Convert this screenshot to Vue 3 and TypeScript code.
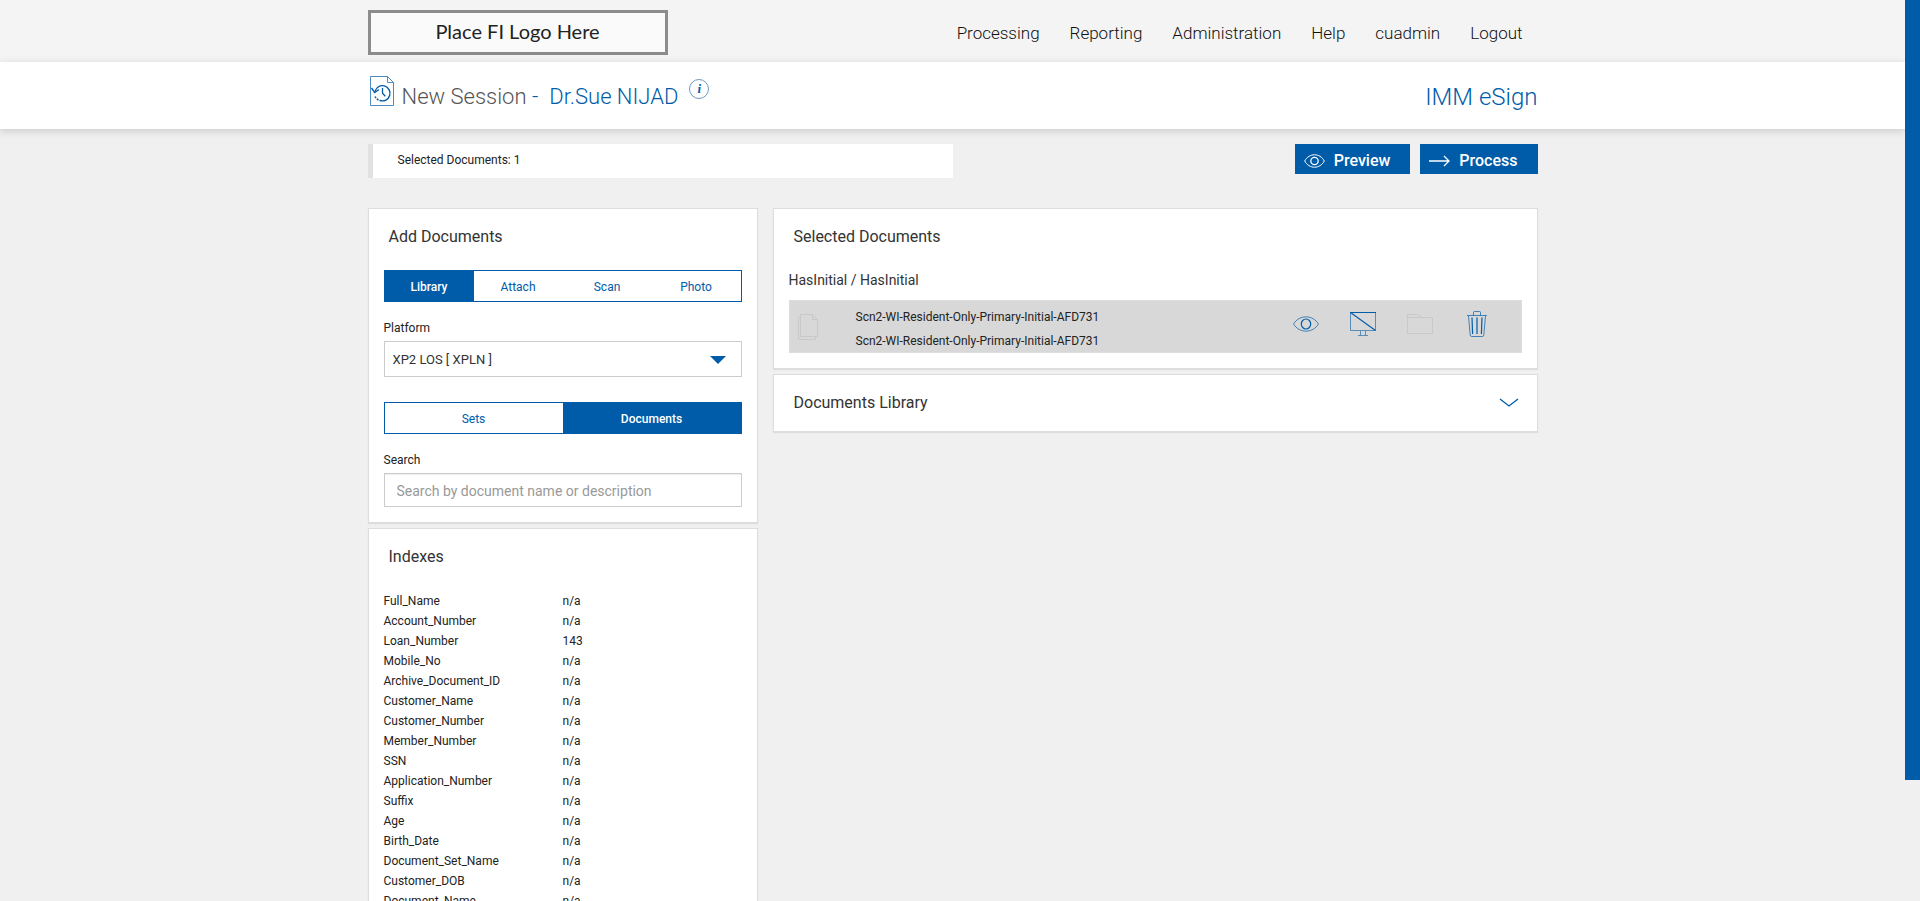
<script setup lang="ts">
import { nextTick, onBeforeUnmount, onMounted, ref } from 'vue'

interface IndexEntry {
  name: string
  value: string
}

const navItems: string[] = ['Processing', 'Reporting', 'Administration', 'Help', 'cuadmin', 'Logout']
const sourceTabs: string[] = ['Library', 'Attach', 'Scan', 'Photo']
const kindTabs: string[] = ['Sets', 'Documents']

const activeSource = ref('Library')
const activeKind = ref('Documents')
const platform = ref('XPLN')
const search = ref('')

const indexes: IndexEntry[] = [
  { name: 'Full_Name', value: 'n/a' },
  { name: 'Account_Number', value: 'n/a' },
  { name: 'Loan_Number', value: '143' },
  { name: 'Mobile_No', value: 'n/a' },
  { name: 'Archive_Document_ID', value: 'n/a' },
  { name: 'Customer_Name', value: 'n/a' },
  { name: 'Customer_Number', value: 'n/a' },
  { name: 'Member_Number', value: 'n/a' },
  { name: 'SSN', value: 'n/a' },
  { name: 'Application_Number', value: 'n/a' },
  { name: 'Suffix', value: 'n/a' },
  { name: 'Age', value: 'n/a' },
  { name: 'Birth_Date', value: 'n/a' },
  { name: 'Document_Set_Name', value: 'n/a' },
  { name: 'Customer_DOB', value: 'n/a' },
  { name: 'Document_Name', value: 'n/a' },
]

const pane = ref<HTMLElement | null>(null)
const thumbHeight = ref(0)
const thumbTop = ref(0)

function syncThumb(): void {
  const el = pane.value
  if (!el) return
  const ratio = el.clientHeight / el.scrollHeight
  thumbHeight.value = Math.round(el.clientHeight * ratio)
  thumbTop.value = Math.round(el.scrollTop * ratio)
}

onMounted(async () => {
  await nextTick()
  syncThumb()
  window.addEventListener('resize', syncThumb)
})
onBeforeUnmount(() => window.removeEventListener('resize', syncThumb))
</script>

<template>
  <div class="shell">
    <div ref="pane" class="pane" @scroll="syncThumb">
      <header class="topbar">
        <div class="container topbar-inner">
          <a class="logo" href="#">Place FI Logo Here</a>
          <nav class="nav">
            <a v-for="item in navItems" :key="item" href="#">{{ item }}</a>
          </nav>
        </div>
      </header>

      <div class="titlebar">
        <div class="container titlebar-inner">
          <svg class="session-icon" width="24" height="30" viewBox="0 0 24 30" fill="none" stroke="#005ca9">
            <path d="M.5.5h17l6 6v23H.5z M17.5.5v6h6" stroke-width="1" opacity=".7" />
            <path d="M5 15.5A7.6 7.6 0 1 1 10 24.5" stroke-width="1.4" />
            <path d="M5 20.5A7.600 7.600 0 0 0 10 24.500" stroke-width="1.4" stroke-dasharray="2 1" />
            <path d="M1.5 12l3.2 4.500 4.300-3" stroke-width="1.3" />
            <path d="M12.5 12v5.200l2.800 3" stroke-width="1.3" />
          </svg>
          <h1>New Session <span>-</span></h1>
          <span class="person">Dr.Sue NIJAD</span>
          <button class="info" type="button" aria-label="Information">i</button>
          <span class="brand">IMM eSign</span>
        </div>
      </div>

      <main class="container">
        <div class="actions">
          <p class="count">Selected Documents: 1</p>
          <div class="buttons">
            <button class="primary" type="button">
              <svg width="21" height="14" viewBox="0 0 21 14" fill="none" stroke="#fff">
                <path d="M.7 7C5-1.3 16-1.3 20.3 7C16 15.3 5 15.3.7 7z" />
                <circle cx="10.5" cy="7" r="3.7" stroke-width="1.3" />
              </svg>
              Preview
            </button>
            <button class="primary" type="button">
              <svg width="21" height="14" viewBox="0 0 21 14" fill="none" stroke="#fff" stroke-width="1.3">
                <path d="M0 7h20M15 2l5 5-5 5" />
              </svg>
              Process
            </button>
          </div>
        </div>

        <div class="columns">
          <div class="column">
            <section class="card">
              <h2>Add Documents</h2>
              <div class="tabs four">
                <button
                  v-for="tab in sourceTabs"
                  :key="tab"
                  type="button"
                  :class="{ active: tab === activeSource }"
                  @click="activeSource = tab"
                >{{ tab }}</button>
              </div>
              <label class="field-label" for="platform">Platform</label>
              <div class="select-wrap">
                <select id="platform" v-model="platform">
                  <option value="XPLN">XP2 LOS [ XPLN ]</option>
                </select>
                <svg class="caret" width="16" height="8" viewBox="0 0 16 8"><path d="M0 0h16L8 8z" fill="#005ca9" /></svg>
              </div>
              <div class="tabs two">
                <button
                  v-for="tab in kindTabs"
                  :key="tab"
                  type="button"
                  :class="{ active: tab === activeKind }"
                  @click="activeKind = tab"
                >{{ tab }}</button>
              </div>
              <label class="field-label" for="search">Search</label>
              <input id="search" v-model="search" class="search" type="text" placeholder="Search by document name or description" />
            </section>

            <section class="card">
              <h2>Indexes</h2>
              <table class="indexes">
                <tbody>
                  <tr v-for="entry in indexes" :key="entry.name">
                    <th scope="row">{{ entry.name }}</th>
                    <td>{{ entry.value }}</td>
                  </tr>
                </tbody>
              </table>
            </section>
          </div>

          <div class="column">
            <section class="card">
              <h2>Selected Documents</h2>
              <h3>HasInitial / HasInitial</h3>
              <div class="doc">
                <svg class="doc-icon" width="20" height="26" viewBox="0 0 20 26" fill="none" stroke="#c8cac8">
                  <path d="M2.5.5h12l5 5v17h-17z M14.5.5v5h5 M2.5 3.5h-2v22h17v-3" />
                </svg>
                <div class="doc-text">
                  <span>Scn2-WI-Resident-Only-Primary-Initial-AFD731</span>
                  <span>Scn2-WI-Resident-Only-Primary-Initial-AFD731</span>
                </div>
                <div class="doc-tools">
                  <button type="button" aria-label="Preview document">
                    <svg width="26" height="26" viewBox="0 0 26 26" fill="none" stroke="#005ca9">
                      <path d="M.6 13C6 3.5 20 3.5 25.4 13C20 22.5 6 22.5.6 13z" stroke-width=".7" />
                      <ellipse cx="13" cy="13" rx="4.7" ry="5" stroke-width="1.2" />
                    </svg>
                  </button>
                  <button type="button" aria-label="Display on screen">
                    <svg width="26" height="26" viewBox="0 0 26 26" fill="none" stroke="#005ca9">
                      <path d="M.5 19.5v-18M25.5 1.5v18M.5 19.5h25M10.5 20v4M15.5 20v4M8 24.5h10" stroke-width=".6" />
                      <path d="M0 1.5h26M.5 1.5l25 18" stroke-width="1.1" />
                    </svg>
                  </button>
                  <button type="button" aria-label="Folder" disabled>
                    <svg width="26" height="26" viewBox="0 0 26 26" fill="none" stroke="#c8cac8">
                      <path d="M.5 22.5v-19h10l4 3h11v16zM.5 6.5h14" />
                    </svg>
                  </button>
                  <button type="button" aria-label="Delete document">
                    <svg width="26" height="26" viewBox="0 0 26 26" fill="none" stroke="#005ca9">
                      <path d="M3 4.5h20M9.5 4.5v-3q0-1 1-1h5q1 0 1 1v3M4.5 5l1.7 19q.1 1.5 1.5 1.5h10.6q1.4 0 1.5-1.5L21.5 5" stroke-width=".7" />
                      <path d="M8 6.5l.6 16.5M13 6.5V23M18 6.5L17.4 23" stroke-width="1.2" />
                    </svg>
                  </button>
                </div>
              </div>
            </section>

            <section class="card collapsed">
              <h2>Documents Library</h2>
              <button class="toggle" type="button" aria-label="Expand Documents Library">
                <svg width="20" height="10" viewBox="0 0 20 10" fill="none" stroke="#005ca9" stroke-width="1.3">
                  <path d="M1 1l9 7 9-7" />
                </svg>
              </button>
            </section>
          </div>
        </div>
      </main>
    </div>
    <div class="rail" aria-hidden="true">
      <div class="thumb" :style="{ height: thumbHeight + 'px', marginTop: thumbTop + 'px' }"></div>
    </div>
  </div>
</template>

<style>
body {
  margin: 0;
  background: #f0f0f0;
}
</style>

<style scoped>
.shell,
.shell * {
  box-sizing: border-box;
}

.shell {
  display: flex;
  height: 100vh;
  font-family: Roboto, 'Liberation Sans', sans-serif;
  font-size: 12px;
  line-height: 20px;
  color: #222;
  background: #f0f0f0;
}

.pane {
  flex: 1;
  overflow-y: auto;
  scrollbar-width: none;
}

.rail {
  width: 15px;
  background: #f0f0f0;
}

.thumb {
  background: #005ca9;
}

button,
input,
select {
  font: inherit;
}

button {
  margin: 0;
  padding: 0;
  border: 0;
  background: none;
  cursor: pointer;
}

a {
  color: inherit;
  text-decoration: none;
}

svg {
  display: block;
  flex: none;
}

.container {
  max-width: 1170px;
  margin: 0 auto;
}

.topbar {
  background: #f4f4f4;
}

.topbar-inner {
  display: flex;
  align-items: center;
  justify-content: space-between;
  height: 62px;
  padding-top: 3px;
}

.logo {
  display: block;
  width: 300px;
  padding-bottom: 2px;
  border: 3px solid #8c8c8c;
  background: #fafafa;
  color: #222;
  font-family: Lato, sans-serif;
  font-size: 20px;
  line-height: 37px;
  text-align: center;
}

.nav {
  display: flex;
  gap: 30px;
  padding-right: 15px;
  color: #111;
  font-size: 17px;
  font-weight: 300;
}

.titlebar {
  position: relative;
  background: #fff;
  box-shadow: 0 2px 8px rgba(0, 0, 0, 0.16);
}

.titlebar-inner {
  display: flex;
  align-items: center;
  height: 67px;
  padding: 2px 0 0 2px;
  font-weight: 300;
}

.session-icon {
  margin-bottom: 12px;
}

h1 {
  margin: 0 11px 0 8px;
  color: #555;
  font-size: 22px;
  font-weight: 300;
}

h1 span,
.person,
.brand {
  color: #005ca9;
}

.person {
  font-size: 22px;
}

.brand {
  margin-left: auto;
  font-size: 24px;
}

.info {
  width: 20px;
  height: 20px;
  margin: 0 0 16px 11px;
  border: 1px solid #6f98c0;
  border-radius: 50%;
  color: #005ca9;
  font: italic bold 13px/18px 'Liberation Serif', serif;
  text-align: center;
}

.actions {
  display: flex;
  align-items: flex-start;
  justify-content: space-between;
  padding: 15px 0 30px;
}

.count {
  width: 50%;
  margin: 0;
  padding: 6px 0 8px 25px;
  border-left: 5px solid #e1e1e1;
  background: #fff;
}

.buttons {
  display: flex;
  gap: 10px;
}

.primary {
  display: flex;
  align-items: center;
  gap: 9px;
  height: 30px;
  padding: 4px 20px 0 9px;
  background: #005ca9;
  color: #fff;
  font-size: 16px;
  font-weight: 500;
}

.columns {
  display: grid;
  grid-template-columns: 390fr 765fr;
  align-items: start;
  gap: 15px;
  padding-bottom: 114px;
}

.column {
  display: grid;
  gap: 5px;
}

.card {
  padding: 15px;
  border: 1px solid #ddd;
  background: #fff;
  box-shadow: 0 1px 1px rgba(0, 0, 0, 0.08);
}

h2 {
  margin: 3px 0 23px 5px;
  color: #333;
  font-size: 16px;
  font-weight: 400;
}

.tabs {
  display: grid;
  height: 32px;
  border: 1px solid #005ca9;
}

.four {
  grid-template-columns: repeat(4, 1fr);
}

.two {
  grid-template-columns: repeat(2, 1fr);
  margin-top: 25px;
}

.tabs button {
  padding-top: 2px;
  color: #005ca9;
}

.tabs .active {
  background: #005ca9;
  color: #fff;
  font-weight: 500;
}

.field-label {
  display: block;
  margin: 16px 0 3px;
}

.select-wrap {
  position: relative;
}

select {
  display: block;
  width: 100%;
  height: 36px;
  padding: 2px 40px 0 8px;
  appearance: none;
  border: 1px solid #ccc;
  border-radius: 0;
  background: #fff;
  color: #333;
  font-size: 13px;
}

.caret {
  position: absolute;
  top: 15px;
  right: 16px;
  pointer-events: none;
}

.search {
  display: block;
  width: 100%;
  height: 34px;
  padding: 2px 12px 0;
  border: 1px solid #ccc;
  border-radius: 0;
  background: #fff;
  box-shadow: inset 0 1px 1px rgba(0, 0, 0, 0.075);
  color: #333;
  font-size: 14px;
}

.search::placeholder {
  color: #999;
  opacity: 1;
}

.indexes {
  width: 100%;
  margin-top: 24px;
  border-collapse: collapse;
  table-layout: fixed;
}

.indexes th,
.indexes td {
  padding: 0;
  font-weight: 400;
  text-align: left;
}

h3 {
  margin: 0 0 10px;
  color: #333;
  font-size: 14px;
  font-weight: 400;
}

.doc {
  display: flex;
  align-items: center;
  height: 53px;
  padding: 0 31px 0 8px;
  border: 1px solid #ddd;
  background: #d8d8d8;
}

.doc-text {
  display: flex;
  flex-direction: column;
  margin-left: 38px;
  padding-top: 5px;
  line-height: 24px;
}

.doc-tools {
  display: flex;
  gap: 31px;
  margin-left: auto;
  padding-bottom: 5px;
}

.collapsed {
  display: flex;
  align-items: center;
  justify-content: space-between;
  padding: 18px;
}

.collapsed h2 {
  margin: 0 0 0 2px;
}
</style>
